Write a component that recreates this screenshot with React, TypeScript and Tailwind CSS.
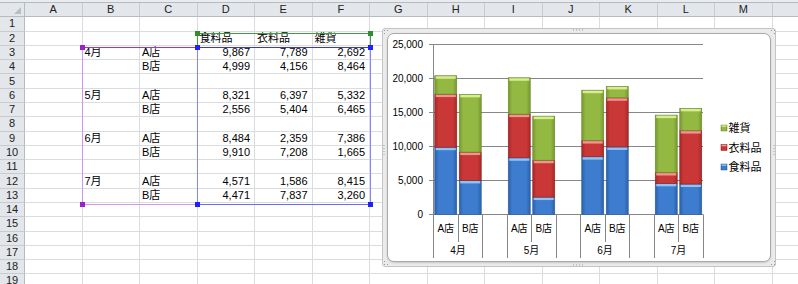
import React from 'react';

const cols = ['A', 'B', 'C', 'D', 'E', 'F', 'G', 'H', 'I', 'J', 'K', 'L', 'M', ''];

// sheet contents, by row number -> [A, B, C, D, E, F]
const sheet: Record<number, string[]> = {
  2: ['', '', '', '食料品', '衣料品', '雑貨'],
  3: ['', '4月', 'A店', '9,867', '7,789', '2,692'],
  4: ['', '', 'B店', '4,999', '4,156', '8,464'],
  6: ['', '5月', 'A店', '8,321', '6,397', '5,332'],
  7: ['', '', 'B店', '2,556', '5,404', '6,465'],
  9: ['', '6月', 'A店', '8,484', '2,359', '7,386'],
  10: ['', '', 'B店', '9,910', '7,208', '1,665'],
  12: ['', '7月', 'A店', '4,571', '1,586', '8,415'],
  13: ['', '', 'B店', '4,471', '7,837', '3,260'],
};

const bars: (number[] | null)[] = [
  [9867, 7789, 2692],
  [4999, 4156, 8464],
  null,
  [8321, 6397, 5332],
  [2556, 5404, 6465],
  null,
  [8484, 2359, 7386],
  [9910, 7208, 1665],
  null,
  [4571, 1586, 8415],
  [4471, 7837, 3260],
];

const series = [
  { name: '食料品', grad: 'gBlue', stroke: '#2a5a9e', cap: '#8ec3f4' },
  { name: '衣料品', grad: 'gRed', stroke: '#8f2020', cap: '#f29490' },
  { name: '雑貨', grad: 'gGreen', stroke: '#68882a', cap: '#d6ee90' },
];

const Y0 = 214.5;
const Y = (v: number) => Y0 - v * (170.5 / 25000);
const X0 = 433.5;
const STEP = 24.5;

const Chart: React.FC = () => {
  const ticks = [0, 5000, 10000, 15000, 20000, 25000];
  const snap = (x: number) => Math.round(x) + 0.5;

  return (
    <svg width={394} height={239} viewBox="382 28 394 239" className="absolute left-0 top-0">
      <defs>
        <linearGradient id="gBlue" x1="0" x2="1" y1="0" y2="0">
          <stop offset="0" stopColor="#2c60aa" />
          <stop offset="0.18" stopColor="#3d7cce" />
          <stop offset="0.82" stopColor="#3d7cce" />
          <stop offset="1" stopColor="#2c60aa" />
        </linearGradient>
        <linearGradient id="gRed" x1="0" x2="1" y1="0" y2="0">
          <stop offset="0" stopColor="#a82828" />
          <stop offset="0.18" stopColor="#c93836" />
          <stop offset="0.82" stopColor="#c93836" />
          <stop offset="1" stopColor="#a82828" />
        </linearGradient>
        <linearGradient id="gGreen" x1="0" x2="1" y1="0" y2="0">
          <stop offset="0" stopColor="#76982e" />
          <stop offset="0.18" stopColor="#93b942" />
          <stop offset="0.82" stopColor="#93b942" />
          <stop offset="1" stopColor="#76982e" />
        </linearGradient>
      </defs>

      {/* gridlines + y ticks */}
      {ticks.map((t) => {
        const y = Math.floor(Y(t)) + 0.5;
        return (
          <g key={t}>
            <line x1={429} x2={703} y1={y} y2={y} stroke="#878787" strokeWidth={1} />
            <text
              x={423}
              y={y + 3.5}
              textAnchor="end"
              fontSize={10}
              fill="#000"
              fontFamily="'Liberation Sans', sans-serif"
            >
              {t === 0 ? '0' : t.toLocaleString('en-US')}
            </text>
          </g>
        );
      })}

      {/* bars */}
      {bars.map((vals, i) => {
        if (!vals) return null;
        const x = X0 + STEP * i + 1.25;
        const w = 22;
        let acc = 0;
        return (
          <g key={i}>
            {vals.map((v, s) => {
              const top = Y(acc + v);
              const bot = Y(acc);
              acc += v;
              const sr = series[s];
              return (
                <g key={s}>
                  <rect x={x} y={top} width={w} height={bot - top} fill={`url(#${sr.grad})`} stroke={sr.stroke} strokeWidth={0.6} />
                  <rect x={x + 1} y={top + 0.6} width={w - 2} height={2.4} fill={sr.cap} />
                </g>
              );
            })}
          </g>
        );
      })}

      {/* value axis */}
      <line x1={433.5} x2={433.5} y1={44} y2={215} stroke="#878787" />

      {/* category axis */}
      {Array.from({ length: 12 }).map((_, k) => {
        const x = snap(X0 + STEP * k - 0.5);
        const short = k === 1 || k === 4 || k === 7 || k === 10;
        return <line key={k} x1={x} x2={x} y1={214.5} y2={short ? 242 : 258} stroke="#878787" />;
      })}
      {bars.map((vals, i) =>
        vals ? (
          <text
            key={i}
            x={X0 + STEP * (i + 0.5)}
            y={232}
            textAnchor="middle"
            fontSize={10}
            fill="#000"
            fontFamily="'Liberation Sans', 'Noto Sans CJK JP', sans-serif"
          >
            {i % 3 === 0 ? 'A店' : 'B店'}
          </text>
        ) : null,
      )}
      {['4月', '5月', '6月', '7月'].map((m, j) => (
        <text
          key={m}
          x={X0 + STEP * (3 * j + 1)}
          y={254}
          textAnchor="middle"
          fontSize={10}
          fill="#000"
          fontFamily="'Liberation Sans', 'Noto Sans CJK JP', sans-serif"
        >
          {m}
        </text>
      ))}

      {/* legend */}
      {[2, 1, 0].map((s, n) => {
        const sr = series[s];
        const cy = [128, 147.5, 167][n];
        return (
          <g key={s}>
            <rect x={721} y={cy - 3} width={6} height={6} fill={`url(#${sr.grad})`} stroke={sr.stroke} strokeWidth={0.5} />
            <rect x={721.5} y={cy - 2.6} width={5} height={1.4} fill={sr.cap} />
            <text
              x={728.5}
              y={cy + 4}
              fontSize={11}
              fill="#000"
              fontFamily="'Noto Sans CJK JP', sans-serif"
            >
              {sr.name}
            </text>
          </g>
        );
      })}

      {/* frame grips */}
      {[0, 3, 6, 9].map((d) => (
        <g key={d} fill="#9a9a9a">
          <rect x={573 + d} y={29.5} width={1} height={1} />
          <rect x={573 + d} y={264.5} width={1} height={1} />
          <rect x={383.5} y={145 + d} width={1} height={1} />
          <rect x={773.5} y={145 + d} width={1} height={1} />
        </g>
      ))}
      {[
        [384, 30], [387, 30], [384, 33],
        [771, 30], [774, 30], [774, 33],
        [384, 264], [387, 264], [384, 261],
        [771, 264], [774, 264], [774, 261],
      ].map(([x, y], i) => (
        <rect key={i} x={x} y={y} width={1} height={1} fill="#9a9a9a" />
      ))}
    </svg>
  );
};

const App: React.FC = () => {
  const rowNums = Array.from({ length: 19 }, (_, i) => i + 1);

  return (
    <div className="relative w-[798px] h-[284px] overflow-hidden bg-white [font-family:'Liberation_Sans','Noto_Sans_CJK_JP',sans-serif] text-[11px] text-black">
      {/* strip under the formula bar */}
      <div className="h-[3px] bg-[#e9ecef] border-b border-[#b6bbc2]" />

      {/* worksheet grid */}
      <div className="grid grid-cols-[25px_repeat(14,57.5px)] grid-rows-[repeat(20,14.286px)]">
        {/* corner */}
        <div className="relative bg-[#e3e6ea] border-r border-b border-[#b6bbc2]">
          <svg width="25" height="14" className="absolute left-0 top-0">
            <polygon points="21,4 21,11 14,11" fill="#b9bec4" />
          </svg>
        </div>
        {cols.map((c, i) => (
          <div
            key={i}
            className="flex items-center justify-center bg-[#e3e6ea] border-r border-b border-r-[#c8ccd1] border-b-[#b6bbc2] text-[#222] leading-none"
          >
            {c}
          </div>
        ))}

        {rowNums.map((r) => (
          <React.Fragment key={r}>
            <div className="flex items-center justify-center bg-[#e3e6ea] border-r border-b border-r-[#b6bbc2] border-b-[#c8ccd1] text-[#222] leading-none">
              {r}
            </div>
            {cols.map((_, ci) => {
              const v = sheet[r]?.[ci] ?? '';
              const num = /^[\d,]+$/.test(v);
              return (
                <div
                  key={ci}
                  className={
                    num
                      ? 'flex items-end justify-end pr-[4px] border-r border-b border-[#dadcdf] leading-[13px] whitespace-nowrap'
                      : 'flex items-end justify-start pl-[2px] border-r border-b border-[#dadcdf] leading-[13px] whitespace-nowrap'
                  }
                >
                  {v}
                </div>
              );
            })}
          </React.Fragment>
        ))}
      </div>

      {/* chart source range highlights (overlay on the grid) */}
      <div className="absolute left-[197px] top-[33px] w-[174px] h-[15px] border border-[#3f9f3f]">
        <div className="absolute -left-[3px] -top-[3px] w-[5px] h-[5px] bg-[#2f8f2f]" />
        <div className="absolute -right-[3px] -top-[3px] w-[5px] h-[5px] bg-[#2f8f2f]" />
      </div>
      <div className="absolute left-[82px] top-[47px] w-[116px] h-[158px] border border-[#d394ec] border-t-[#a033d2]">
        <div className="absolute -left-[3px] -top-[3px] w-[5px] h-[5px] bg-[#9a22cc]" />
        <div className="absolute -left-[3px] -bottom-[3px] w-[5px] h-[5px] bg-[#9a22cc]" />
      </div>
      <div className="absolute left-[197px] top-[47px] w-[174px] h-[158px] border border-[#8585ff] border-t-[#3434ff] border-b-[#6a6aff]">
        <div className="absolute -left-[3px] -top-[3px] w-[5px] h-[5px] bg-[#1f1fff]" />
        <div className="absolute -right-[3px] -top-[3px] w-[5px] h-[5px] bg-[#1f1fff]" />
        <div className="absolute -left-[3px] -bottom-[3px] w-[5px] h-[5px] bg-[#1f1fff]" />
        <div className="absolute -right-[3px] -bottom-[3px] w-[5px] h-[5px] bg-[#1f1fff]" />
      </div>

      {/* embedded chart, floating over the sheet */}
      <div className="absolute left-[382px] top-[28px] w-[394px] h-[239px]">
        <div className="w-full h-full rounded-[3px] border border-[#c4c4c4] bg-[#ebebeb] p-[4px]">
          <div className="w-full h-full rounded-[7px] border border-[#a9a9a9] bg-white shadow-[0_1px_2px_rgba(0,0,0,0.15)]" />
        </div>
        <Chart />
      </div>
    </div>
  );
};

export default App;
